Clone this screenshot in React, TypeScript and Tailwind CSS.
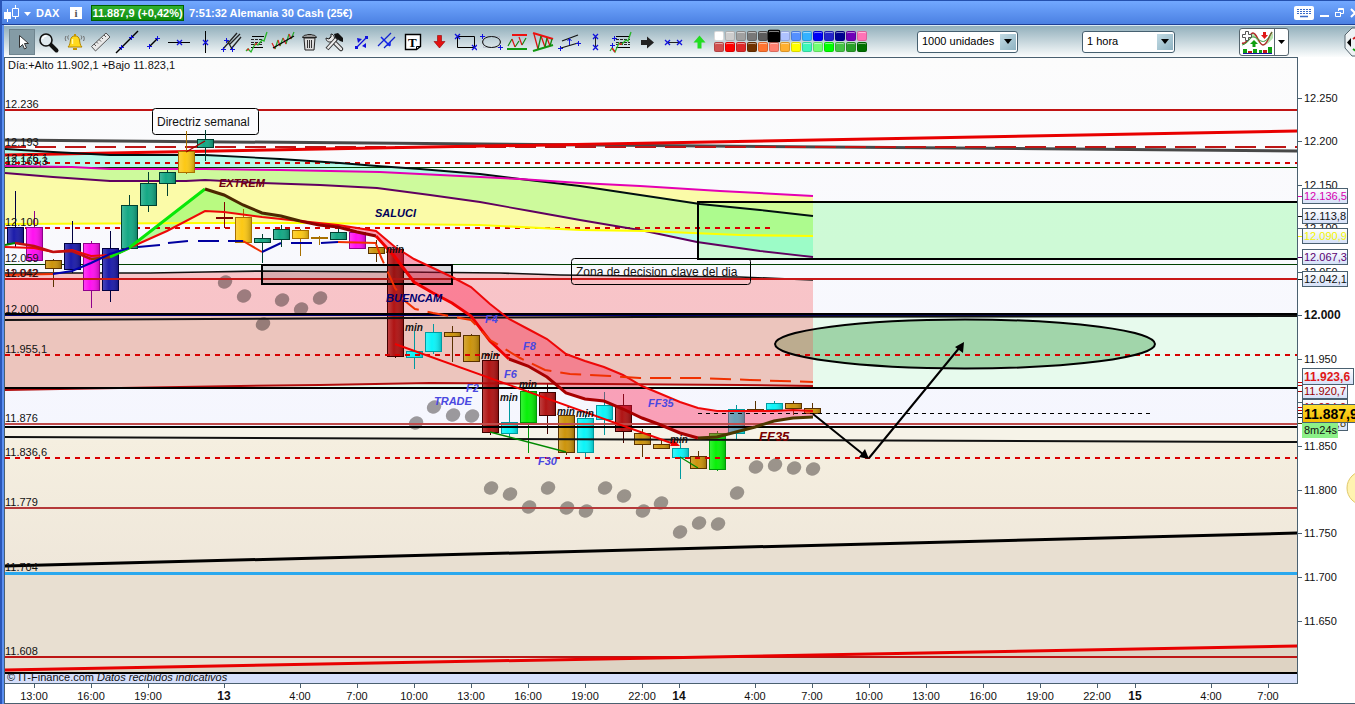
import { ReactNode } from "react";

type Point = [number, number];

const pts = (list: Point[]) => list.map((p) => p.join(",")).join(" ");

/* ---------- toolbar icons ---------- */

const Plus = ({ x, y }: { x: number; y: number }) => (
  <path
    d={`M${x - 2} ${y + 0.5}h5M${x + 0.5} ${y - 2}v5`}
    stroke="#1111dd"
    strokeWidth="1"
  />
);

const Cross = ({ x, y }: { x: number; y: number }) => (
  <path
    d={`M${x - 2} ${y - 2}l5 5M${x + 3} ${y - 2}l-5 5`}
    stroke="#1111dd"
    strokeWidth="1.3"
  />
);

const tools: { name: string; icon: ReactNode }[] = [
  {
    name: "Cursor",
    icon: (
      <path
        d="M10.500 6.500v12l3-3 2 4.500 2-1-2-4.500h4z"
        fill="#fff"
        stroke="#333"
      />
    ),
  },
  {
    name: "Zoom",
    icon: (
      <>
        <path d="M15 15l6.500 6.500" stroke="#111" strokeWidth="4" strokeLinecap="round" />
        <circle cx="11" cy="11" r="6" fill="#dfe9ee" stroke="#111" strokeWidth="1.6" />
        <path d="M7.500 10a4 4 0 0 1 4-3" stroke="#fff" strokeWidth="1.5" />
      </>
    ),
  },
  {
    name: "Alert",
    icon: (
      <>
        <path
          d="M7 18c2-2 2-4 2.500-7 .5-3 2-4 4.500-4s4 1 4.500 4c.5 3 .5 5 2.500 7z"
          fill="#ffd91e"
          stroke="#b38600"
        />
        <path d="M12 19h4v2h-4zM13 5h2v2h-2z" fill="#c79500" />
        <path d="M11.500 10v5" stroke="#fff8b0" strokeWidth="1.5" />
        <path d="M5 7c-1 2-1 3 0 5M7.500 6.500c-1 1.500-1 2 0 4M22.500 7c1 2 1 3 0 5M20 6.500c1 1.500 1 2 0 4" stroke="#666" />
      </>
    ),
  },
  {
    name: "Ruler",
    icon: (
      <>
        <path d="M4.500 17.500L19 4l4 4L8.500 22z" fill="#e9e9e9" stroke="#555" />
        <path d="M7 15l2 2M9.500 13l1.500 1.500M12 10.500l2 2M14.500 8.500L16 10M17 6l2 2" stroke="#555" />
      </>
    ),
  },
  {
    name: "Line",
    icon: (
      <>
        <path d="M3 24L25 2" stroke="#000" strokeWidth="1.4" />
        <Plus x={8} y={18} />
        <Plus x={18} y={8} />
      </>
    ),
  },
  {
    name: "Segment",
    icon: (
      <>
        <path d="M10 18L19 9" stroke="#000" strokeWidth="1.4" />
        <Plus x={10} y={17} />
        <Plus x={18} y={9} />
      </>
    ),
  },
  {
    name: "Horizontal line",
    icon: (
      <>
        <path d="M3 13.500h22" stroke="#000" />
        <Cross x={14} y={13} />
      </>
    ),
  },
  {
    name: "Vertical line",
    icon: (
      <>
        <path d="M14.500 2v22" stroke="#000" />
        <Cross x={14} y={13} />
      </>
    ),
  },
  {
    name: "Pitchfork",
    icon: (
      <>
        <path d="M6 20L20 4M10 11l5 9M12 16L23 5M14 20l10-12" stroke="#222" strokeWidth="1.3" />
        <Plus x={6} y={20} />
        <Plus x={15} y={20} />
        <Plus x={9} y={11} />
      </>
    ),
  },
  {
    name: "Fibonacci",
    icon: (
      <>
        <path d="M9 7.500h12M8 18.500h12" stroke="#000" />
        <path d="M8 10.500h12M8 13.500h12M8 15.500h12" stroke="#222" strokeDasharray="3 1" />
        <path d="M3 22l2-2 3 3 4-8 3 1 4-5 2 1 3-9" stroke="#27b527" strokeWidth="1.3" />
        <path d="M4 21l2-1M12 16l2-2" stroke="#d22" strokeWidth="1.5" />
      </>
    ),
  },
  {
    name: "Regression",
    icon: (
      <>
        <path d="M6 20l3-9M11 17l3-8M17 15l3-10M22 10l3-7" stroke="#27a527" strokeWidth="1.2" />
        <path d="M3 14l3 6M9 11l2 6M14 9l3 6M20 5l2 5" stroke="#d22" strokeWidth="1.2" />
        <path d="M4 19L25 7" stroke="#000" strokeWidth="1.3" />
      </>
    ),
  },
  {
    name: "Delete",
    icon: (
      <>
        <path d="M9 9h11l-1 12h-9z" fill="#ddd" stroke="#222" />
        <path d="M12.500 11v8M14.500 11v8M16.500 11v8" stroke="#333" />
        <path d="M7.500 8.500c1-3 4-2 5-3h4c1 1 4 0 5 3z" fill="#999" stroke="#222" />
      </>
    ),
  },
  {
    name: "Settings",
    icon: (
      <>
        <path d="M10 10l10 10" stroke="#222" strokeWidth="4.500" strokeLinecap="round" />
        <path d="M5 9c0 4 4 5 7 3s1-7-2-7v3L8 10z" fill="#e4e4e4" stroke="#222" />
        <path d="M11 11l9 9" stroke="#e4e4e4" strokeWidth="2.500" strokeLinecap="round" />
        <path d="M6 20L16 9" stroke="#333" strokeWidth="4" />
        <path d="M6.500 19.500L15 10" stroke="#eee" strokeWidth="2" />
        <path d="M13 5l4-1 5 5v4l-3-1-5-4z" fill="#111" />
      </>
    ),
  },
  {
    name: "Arrow line",
    icon: (
      <>
        <path d="M10 18L20 8" stroke="#1111dd" strokeWidth="1.3" />
        <path d="M8 17h3v3H8zM18 7h3v3h-3z" fill="#1111dd" />
        <path d="M10 9l5 1-4 4zM15 17l4-3v5z" fill="#1111dd" />
      </>
    ),
  },
  {
    name: "Channel",
    icon: (
      <>
        <path d="M5 17L18 4M11 19L22 8" stroke="#1122cc" strokeWidth="1.3" />
        <path d="M8 8l9 9M14 16h3v-3" stroke="#1122ee" strokeWidth="1.5" />
      </>
    ),
  },
  {
    name: "Text",
    icon: (
      <>
        <path d="M6.500 5.500h15v12l-4 3h-11z" fill="#fff" stroke="#000" strokeWidth="1.4" />
        <path d="M17.500 20.500v-3h4" stroke="#000" />
        <text x="9" y="18" fontSize="13" fontWeight="bold" fill="#000" className="font-['Liberation_Serif',serif]">
          T
        </text>
      </>
    ),
  },
  {
    name: "Sell",
    icon: <path d="M12.500 6.500h4v6h3.500l-5.500 6.500-5.500-6.500h3.500z" fill="#e31212" stroke="#990000" strokeWidth=".6" />,
  },
  {
    name: "Rectangle",
    icon: (
      <>
        <path d="M6.500 7.500h17v11h-17z" stroke="#000" />
        <Cross x={6} y={7} />
        <Cross x={23} y={18} />
      </>
    ),
  },
  {
    name: "Ellipse",
    icon: (
      <>
        <path d="M6.500 7.500h16v11h-16z" stroke="#aab" strokeWidth=".6" />
        <ellipse cx="14.500" cy="13" rx="9" ry="5.500" stroke="#111" />
        <Plus x={5} y={7} />
        <Plus x={23} y={18} />
      </>
    ),
  },
  {
    name: "Support and resistance",
    icon: (
      <>
        <path d="M9 6h15" stroke="#ee1111" strokeWidth="2" />
        <path d="M4 20h20" stroke="#119911" strokeWidth="2" />
        <path d="M5 17l4-7M12 18l4-6M19 16l4-7" stroke="#118811" strokeWidth="1.2" />
        <path d="M9 10l3 8M16 8l3 8" stroke="#dd1111" strokeWidth="1.2" />
      </>
    ),
  },
  {
    name: "Triangle",
    icon: (
      <>
        <path d="M4 4l20 6" stroke="#ee1111" strokeWidth="2" />
        <path d="M4 22l20-6" stroke="#119911" strokeWidth="2" />
        <path d="M5 5l4 15M12 7l4 11M18 9l3 8" stroke="#dd1111" strokeWidth="1.3" />
        <path d="M9 20l3-13M16 18l2-9M21 17l2-7" stroke="#118811" strokeWidth="1.3" />
      </>
    ),
  },
  {
    name: "Parallel lines",
    icon: (
      <>
        <path d="M7 12L23 6M6 19l17-5" stroke="#111" strokeWidth="1.3" />
        <path d="M14.500 16v-6M12.500 12l2-2.500 2 2.500" stroke="#1111dd" />
        <Plus x={5} y={19} />
        <Plus x={23} y={14} />
      </>
    ),
  },
  {
    name: "Vertical measure",
    icon: (
      <>
        <path d="M14.500 7v12" stroke="#222" />
        <Cross x={14} y={7} />
        <Cross x={14} y={18} />
      </>
    ),
  },
  {
    name: "Fibonacci projection",
    icon: (
      <>
        <path d="M9 7.500h14M9 18.500h14" stroke="#000" />
        <path d="M9 10.500h14M9 13.500h14M9 15.500h14" stroke="#222" strokeDasharray="3 1" />
        <path d="M3 22l2-3 3 4 4-9 3 1 4-4 2 1 3-9" stroke="#27b527" strokeWidth="1.3" />
        <path d="M5 19l3 4M12 15l3 0" stroke="#d22" strokeWidth="1.5" />
        <Plus x={7} y={9} />
        <Plus x={5} y={16} />
      </>
    ),
  },
  {
    name: "Next",
    icon: <path d="M8 11h6V7.500l7 6-7 6V16H8z" fill="#222" />,
  },
  {
    name: "Horizontal measure",
    icon: (
      <>
        <path d="M8 13.500h13" stroke="#222" />
        <Cross x={8} y={13} />
        <Cross x={20} y={13} />
      </>
    ),
  },
  {
    name: "Buy",
    icon: <path d="M12.500 19.500h4v-6h4l-6-7-6 7h4z" fill="#22dd22" />,
  },
];

const palette = [
  "bg-white", "bg-[#cdcdcd]", "bg-[#a0a0a0]", "bg-[#787878]", "bg-[#5c5c5c]", "bg-black", "bg-[#aec2ff]",
  "bg-[#5590ff]", "bg-[#33b2ff]", "bg-[#0000f5]", "bg-[#2424cc]", "bg-[#000090]", "bg-[#7000b8]", "bg-[#ff72b6]",
  "bg-[#d05050]", "bg-[#ff0000]", "bg-[#de2828]", "bg-[#703200]", "bg-[#ff7430]", "bg-[#ff8070]", "bg-[#ffb030]",
  "bg-[#ffff00]", "bg-[#3cf8b8]", "bg-[#72ff72]", "bg-[#00ff00]", "bg-[#44c444]", "bg-[#28a028]", "bg-[#007000]",
];

/* ---------- chart data ---------- */

const candleColors = {
  navy: { fill: "#1c1caa", edge: "#000040" },
  magenta: { fill: "#ff10f0", edge: "#90008c" },
  gold: { fill: "#cc940c", edge: "#5a3200" },
  yellow: { fill: "#fcc814", edge: "#a87000" },
  teal: { fill: "#14a884", edge: "#004030" },
  red: { fill: "#b01414", edge: "#400000" },
  maroon: { fill: "#800000", edge: "#800000" },
  cyan: { fill: "#0cf4f8", edge: "#009aa0" },
  green: { fill: "#08f008", edge: "#00980a" },
};

type Candle = [number, keyof typeof candleColors, number, number, number, number];

// x, colour, body top, body bottom, wick top, wick bottom
const candles: Candle[] = [
  [15, "navy", 227, 243, 191, 248],
  [34, "magenta", 227, 260, 211, 262],
  [53, "gold", 260, 268, 259, 287],
  [72, "navy", 243, 269, 221, 273],
  [91, "magenta", 243, 290, 241, 308],
  [110, "navy", 248, 290, 231, 302],
  [129, "teal", 205, 248, 195, 249],
  [148, "teal", 183, 205, 172, 212],
  [167, "teal", 172, 183, 170, 196],
  [186, "yellow", 151, 172, 132, 174],
  [205, "teal", 139, 147, 130, 161],
  [224, "maroon", 217, 218, 202, 228],
  [243, "yellow", 217, 242, 209, 243],
  [262, "teal", 238, 242, 234, 263],
  [281, "teal", 229, 239, 225, 247],
  [300, "yellow", 230, 238, 229, 256],
  [319, "yellow", 237, 238, 236, 245],
  [338, "teal", 232, 239, 228, 240],
  [357, "magenta", 232, 248, 231, 249],
  [376, "gold", 247, 253, 240, 262],
  [395, "red", 249, 356, 248, 358],
  [414, "cyan", 351, 357, 331, 369],
  [433, "cyan", 332, 351, 324, 354],
  [452, "gold", 332, 336, 326, 362],
  [471, "gold", 335, 361, 334, 362],
  [490, "red", 360, 432, 359, 435],
  [509, "cyan", 422, 433, 400, 437],
  [528, "green", 391, 422, 390, 453],
  [547, "red", 392, 415, 383, 434],
  [566, "gold", 415, 452, 414, 455],
  [585, "cyan", 418, 452, 415, 457],
  [604, "cyan", 405, 419, 392, 435],
  [623, "red", 405, 431, 394, 443],
  [642, "gold", 433, 444, 429, 457],
  [661, "gold", 444, 448, 440, 449],
  [680, "cyan", 448, 457, 442, 479],
  [698, "gold", 456, 468, 451, 469],
  [717, "green", 433, 469, 431, 471],
  [736, "cyan", 409, 433, 405, 440],
  [755, "gold", 409, 411, 401, 411],
  [774, "cyan", 403, 409, 401, 410],
  [793, "gold", 403, 408, 401, 415],
  [812, "gold", 408, 413, 403, 414],
];

const dots: Point[] = [
  [225, 282], [244, 296], [263, 324], [282, 300], [301, 309], [320, 298],
  [416, 423], [434, 407], [453, 415], [472, 416],
  [491, 488], [510, 494], [529, 507], [548, 488], [567, 508], [586, 511], [605, 488],
  [624, 496], [643, 511], [661, 503], [680, 532], [699, 523], [718, 524], [737, 493],
  [756, 467], [775, 465], [794, 468], [813, 469],
];

const black: Point[] = [
  [5, 149], [53, 152], [110, 155], [205, 155], [280, 159], [340, 163], [377, 166], [420, 169], [480, 174],
  [520, 179], [580, 186], [640, 195], [700, 204], [760, 210], [813, 216],
];
const magenta: Point[] = [
  [5, 166], [72, 167], [110, 169], [205, 169], [280, 170], [380, 172], [480, 177], [520, 179], [580, 183],
  [640, 186], [720, 191], [813, 196],
];
const purple: Point[] = [
  [5, 173], [53, 177], [110, 181], [186, 181], [205, 180], [262, 183], [320, 185], [377, 188], [430, 195],
  [480, 202], [530, 211], [580, 220], [645, 231], [697, 242], [760, 251], [813, 257],
];
const yellow: Point[] = [
  [5, 224], [205, 223], [300, 223], [480, 225], [580, 230], [645, 231], [740, 235], [813, 236],
];

const before = (list: Point[], x: number) => list.filter((p) => p[0] <= x);
const after = (list: Point[], x: number) => list.filter((p) => p[0] >= x);
const band = (a: Point[], b: Point[]) => pts([...a, ...[...b].reverse()]);

const slow: Point[] = [
  [5, 247], [34, 248], [53, 252], [72, 250], [91, 256], [110, 255], [129, 248], [167, 231], [205, 211],
  [224, 212], [262, 217], [300, 221], [338, 225], [376, 231], [395, 247], [414, 259], [433, 268],
  [452, 277], [471, 287], [490, 304], [509, 319], [528, 329], [547, 339], [566, 354], [585, 361],
  [604, 367], [623, 375], [642, 386], [661, 394], [680, 402], [698, 408], [717, 411], [736, 411],
  [774, 411], [793, 410], [813, 411],
];
const fast: Point[] = [
  [5, 245], [15, 243], [34, 246], [53, 252], [72, 251], [91, 259], [110, 257], [129, 248], [205, 189],
  [224, 195], [243, 205], [262, 213], [281, 216], [300, 221], [319, 225], [338, 227], [357, 232],
  [376, 236], [395, 257], [414, 282], [433, 293], [452, 303], [471, 316], [490, 341], [509, 359],
  [528, 366], [547, 377], [566, 393], [585, 399], [604, 401], [623, 409], [642, 418], [661, 425],
  [680, 433], [698, 438], [717, 437], [736, 432], [755, 427], [774, 421], [793, 418], [813, 417],
];
const between = (list: Point[], a: number, b: number) => after(before(list, b), a);

const zoneTop: Point[] = [
  [5, 273], [150, 273], [205, 272], [262, 271], [400, 272], [500, 273], [560, 275], [640, 276], [740, 277], [813, 280],
];
const zoneBottom: Point[] = [
  [5, 390], [60, 389], [120, 388], [240, 386], [320, 385], [430, 383], [600, 384], [740, 385], [813, 386],
];

const levels: [string, number][] = [
  ["12.236", 108], ["12.193", 146], ["12.176,1", 162], ["12.169,3", 165], ["12.100", 226],
  ["12.059", 262], ["12.042", 277], ["12.000", 313], ["11.955,1", 353], ["11.876", 422],
  ["11.836,6", 456], ["11.779", 506], ["11.704", 571], ["11.608", 655],
];

const notes: [string, number, number, string][] = [
  ["EXTREM", 219, 187, "#6e0010"],
  ["SALUCI", 375, 217, "#000058"],
  ["BUENCAM", 386, 302, "#000070"],
  ["F4", 485, 323, "#4a48e0"],
  ["F8", 523, 350, "#4a48e0"],
  ["F6", 504, 378, "#4a48e0"],
  ["F2", 466, 392, "#4a48e0"],
  ["TRADE", 434, 405, "#4a48e0"],
  ["F30", 538, 465, "#4a48e0"],
  ["FF35", 648, 407, "#4a48e0"],
];

const mins: Point[] = [
  [386, 253], [405, 331], [481, 359], [500, 401], [519, 388], [557, 415], [576, 417], [670, 443],
];

const prices: [string, number][] = [
  ["12.250", 98], ["12.200", 141], ["12.150", 185], ["12.100", 228], ["12.050", 272],
  ["11.950", 359], ["11.850", 446], ["11.800", 490], ["11.750", 533],
  ["11.700", 577], ["11.650", 621],
];

const priceTags: [string, number, string][] = [
  ["12.136,5", 196, "#d800b0"],
  ["12.113,8", 216, "#111"],
  ["12.090,9", 236, "#f4f400"],
  ["12.067,3", 257, "#5c0070"],
  ["12.042,1", 279, "#111"],
  ["11.904,0", 407, "#c00000"],
  ["11.883,8", 423, "#4a3a00"],
  ["11.920,7", 391, "#990000"],
];

const times: [string, number][] = [
  ["13:00", 34], ["16:00", 91], ["19:00", 148], ["13", 224], ["4:00", 300], ["7:00", 357],
  ["10:00", 414], ["13:00", 471], ["16:00", 528], ["19:00", 585], ["22:00", 642], ["14", 679],
  ["4:00", 755], ["7:00", 812], ["10:00", 869], ["13:00", 926], ["16:00", 983], ["19:00", 1040],
  ["22:00", 1097], ["15", 1135], ["4:00", 1211], ["7:00", 1268],
];

/* ---------- chart ---------- */

const HLine = ({ y, color, w = 2, dash, x1 = 5, x2 = 1297 }: {
  y: number;
  color: string;
  w?: number;
  dash?: string;
  x1?: number;
  x2?: number;
}) => (
  <line x1={x1} x2={x2} y1={y} y2={y} stroke={color} strokeWidth={w} strokeDasharray={dash} />
);

const Plot = () => (
  <svg
    viewBox="5 58 1292 625"
    preserveAspectRatio="none"
    className="block w-full h-[625px]"
    fill="none"
    fontSize="11"
  >
    <defs>
      <linearGradient id="sky" x1="0" y1="0" x2="0" y2="1">
        <stop offset="0" stopColor="#fcfcfc" />
        <stop offset="1" stopColor="#f5f6fe" />
      </linearGradient>
      <linearGradient id="sand" x1="0" y1="0" x2="0" y2="1">
        <stop offset="0" stopColor="#f5efe0" />
        <stop offset="1" stopColor="#efe7da" />
      </linearGradient>
      <linearGradient id="shine" x1="0" y1="0" x2="1" y2="0">
        <stop offset="0" stopColor="#fff" stopOpacity=".18" />
        <stop offset=".4" stopColor="#fff" stopOpacity="0" />
        <stop offset="1" stopColor="#000" stopOpacity=".22" />
      </linearGradient>
    </defs>

    {/* background zones */}
    <rect x="5" y="58" width="1292" height="370" fill="url(#sky)" />
    <rect x="5" y="316" width="1292" height="72" fill="#e7faed" />
    <rect x="5" y="428" width="1292" height="12" fill="#f6f3e8" />
    <rect x="5" y="440" width="1292" height="128" fill="url(#sand)" />
    <polygon points="5,566 1297,533 1297,673 5,673" fill="#e8dfd1" />
    <polygon points="5,670 1297,646 1297,673 5,673" fill="#ded3c3" />
    <rect x="5" y="674" width="1292" height="10" fill="#d6dffb" />
    <ellipse cx="965" cy="344" rx="190" ry="24.500" fill="#008010" fillOpacity=".3" />
    <polygon points={band(zoneTop, zoneBottom)} fill="#fa5255" fillOpacity=".31" />

    {/* moving average bands */}
    <polygon points={band(before(black, 520), before(magenta, 520))} fill="#b6fbe9" />
    <polygon points={band(before(magenta, 520), [...before(purple, 480), [520, 209]])} fill="#cdfa9c" />
    <polygon points={band(before(purple, 645), before(yellow, 645))} fill="#fbfba8" />
    <polygon points={band(after(magenta, 520), after(black, 520))} fill="#fbfba8" />
    <polygon
      points={band([...after(black, 520)], [[520, 209], [580, 220], ...after(yellow, 645)])}
      fill="#cdfa9c"
    />
    <polygon points={band(after(yellow, 645), after(purple, 645))} fill="#b6fbe9" />
    <rect x="699" y="203" width="620" height="56" fill="#50ff64" fillOpacity=".25" />

    <polygon points={band(between(fast, 129, 300), between(slow, 129, 300))} fill="#9cfa70" fillOpacity=".7" />

    {/* levels */}
    <HLine y={110} color="#c01414" />
    <path d="M5 140L1297 151" stroke="#484848" strokeWidth="3" />
    <HLine y={147} color="#bd1515" dash="21 9" />
    <path d="M5 155L1297 131" stroke="#e80000" strokeWidth="3" />
    <HLine y={163} color="#d80000" dash="5 5" />
    <HLine y={167.5} color="#004000" w={1} />
    <HLine y={228} color="#d80000" dash="5 5" x2={770} />
    <HLine y={264.5} color="#004000" w={1} />
    <polyline points={pts(zoneTop)} stroke="#101010" strokeWidth="1.6" />

    <polyline points={pts(black)} stroke="#001010" strokeWidth="1.8" />
    <polyline points={pts(magenta)} stroke="#e400b4" strokeWidth="2" />
    <polyline points={pts(purple)} stroke="#600060" strokeWidth="1.8" />
    <polyline points={pts(yellow)} stroke="#ffff00" strokeWidth="2.200" />

    {dots.map(([x, y]) => (
      <ellipse
        key={x}
        cx={x}
        cy={y}
        rx="7.500"
        ry="6.300"
        transform={`rotate(-30 ${x} ${y})`}
        fill="#201818"
        fillOpacity=".42"
      />
    ))}

    {/* candles */}
    {candles.map(([x, name, top, bottom, high, low]) => {
      const { fill, edge } = candleColors[name];
      return (
        <g key={x}>
          <path d={`M${x + 0.5} ${high}V${low}`} stroke={edge} />
          <rect x={x - 7.5} y={top + 0.5} width="16" height={bottom - top} fill={fill} stroke={edge} />
          <rect x={x - 7} y={top + 1} width="15" height={bottom - top - 1} fill="url(#shine)" />
        </g>
      );
    })}

    <polygon points={band(after(slow, 300), after(fast, 300))} fill="#ff1446" fillOpacity=".38" />
    <HLine y={279} color="#c81818" />
    <rect x="262" y="265" width="190" height="19" fill="#000" fillOpacity=".12" stroke="#000" strokeWidth="2" />
    <path d="M1297 202H698V259H1297" stroke="#000" strokeWidth="2" />

    <polyline points={pts(zoneBottom)} stroke="#b00c0c" strokeWidth="2" />
    <rect x="5" y="313" width="1292" height="2" fill="#000" />
    <HLine y={315.5} color="#000070" w={1} />
    <path d="M5 320L640 317L1297 316" stroke="#111" strokeWidth="2" />
    <HLine y={355} color="#d80000" dash="5 5" />
    <HLine y={388} color="#000" />
    <HLine y={424} color="#bf4a4a" />
    <HLine y={427} color="#000" />
    <path d="M5 437L1297 442" stroke="#111" strokeWidth="2" />
    <HLine y={458} color="#d80000" dash="5 5" />
    <HLine y={508} color="#b53a3a" />
    <path d="M5 566L1297 533" stroke="#000" strokeWidth="3" />
    <HLine y={573.5} color="#2aa8ee" w={3} />
    <HLine y={657} color="#bd1515" />
    <path d="M5 670L1297 646" stroke="#e80000" strokeWidth="3" />
    <HLine y={673} color="#000" />
    <HLine y={413.5} color="#000" w={1} dash="4 4" x1={698} x2={1150} />

    {/* averages */}
    <polyline points={pts(slow)} stroke="#ee0808" strokeWidth="2" />
    <polyline points={pts(before(fast, 15))} stroke="#008800" strokeWidth="2" />
    <polyline points={pts(between(fast, 15, 91))} stroke="#c01010" strokeWidth="2.500" />
    <polyline points={pts(between(fast, 91, 129))} stroke="#9a3000" strokeWidth="2.500" />
    <polyline points={pts(between(fast, 110, 205))} stroke="#08e808" strokeWidth="3" />
    <polyline points={pts(between(fast, 205, 300))} stroke="#4c2800" strokeWidth="3" />
    <polyline points={pts(between(fast, 300, 376))} stroke="#900000" strokeWidth="3" />
    <polyline points={pts(between(fast, 376, 509))} stroke="#f00000" strokeWidth="3" />
    <polyline points={pts(between(fast, 509, 698))} stroke="#a80000" strokeWidth="3" />
    <polyline points={pts(after(fast, 698))} stroke="#4c3800" strokeWidth="3" />

    <path d="M5 275L53 274M243 241L262 252M338 242L376 243" stroke="#f03000" strokeWidth="2" />
    <path d="M53 274L72 271L91 263L110 254L129 248" stroke="#0000b0" strokeWidth="2" />
    <path d="M138 247L160 245M168 243L188 241M198 241H219M228 241H243M262 252L281 243M291 243H312M321 243L338 242" stroke="#0000a0" strokeWidth="2" />
    <path
      d="M376 244L381 257L395 288L405 301L415 309L433 313L471 320L490 340L520 358L545 370L570 374L610 376L640 378L700 378L750 380L813 382"
      stroke="#f03000"
      strokeWidth="2"
      strokeDasharray="21 9"
    />

    {/* drawings */}
    <path d="M395 344L674 444" stroke="#f00000" strokeWidth="2" />
    <path d="M680 446L670 446L673 439z" fill="#f00000" />
    <path d="M490 432L566 452M680 457L698 468" stroke="#008800" strokeWidth="1.300" />
    <path d="M186 152L205 141" stroke="#a00000" strokeWidth="1.300" />
    <ellipse cx="965" cy="344" rx="190" ry="24.500" stroke="#000" strokeWidth="2" />
    <path d="M813 414L864 455M869 458L960 347" stroke="#000" strokeWidth="2" />
    <path d="M869 459L859 457L865 449zM964 342L955 347L963 353z" fill="#000" />

    {/* labels */}
    <g fill="#111">
      <text x="8" y="69">Día:+Alto 11.902,1 +Bajo 11.823,1</text>
      <text x="5" y="277" fill="#990000">11.042</text>
      {levels.map(([label, y]) => (
        <text key={label} x="5" y={y}>
          {label}
        </text>
      ))}
      <rect x="152.500" y="108.500" width="106" height="26" rx="3" fill="#fcfcfe" stroke="#000" />
      <path d="M186.500 131v4" stroke="#a87000" />
      <path d="M205.500 130v5" stroke="#004030" />
      <text x="157" y="126" fontSize="12">Directriz semanal</text>
      <rect x="571.500" y="258.500" width="179" height="26" rx="3" fill="none" stroke="#000" />
      <text x="576" y="276" fontSize="12">Zona de decision clave del dia</text>
      <text x="7" y="681">© IT-Finance.com</text>
      <text x="97" y="681" fontStyle="italic">Datos recibidos indicativos</text>
    </g>
    <g fontWeight="bold" fontStyle="italic">
      {notes.map(([label, x, y, color]) => (
        <text key={label} x={x} y={y} fill={color}>
          {label}
        </text>
      ))}
      <text x="759" y="441" fontSize="13" fill="#7a0000">FF35</text>
      <g fontSize="10" fill="#111">
        {mins.map(([x, y]) => (
          <text key={x} x={x} y={y}>
            min
          </text>
        ))}
      </g>
    </g>
  </svg>
);

const PriceAxis = () => (
  <svg viewBox="1297 57 58 647" className="block shrink-0 w-[58px] h-[647px]" fontSize="11" fill="#111">
    <defs>
      <linearGradient id="tag" x1="0" y1="0" x2="0" y2="1">
        <stop offset="0" stopColor="#fff" />
        <stop offset="1" stopColor="#d4e0f8" />
      </linearGradient>
      <linearGradient id="gold" x1="0" y1="0" x2="0" y2="1">
        <stop offset="0" stopColor="#ffe030" />
        <stop offset="1" stopColor="#f4b800" />
      </linearGradient>
    </defs>
    <path d="M1297.500 57V684" stroke="#4a6070" />
    <path d="M1297 703.500H1355" stroke="#4a6070" />
    {prices.map(([label, y]) => (
      <g key={label}>
        <path d={`M1298 ${y + 0.5}h4`} stroke="#4a6070" />
        <text x="1304" y={y + 4}>
          {label}
        </text>
      </g>
    ))}
    <path d="M1298 315.500h4M1298 402.500h4" stroke="#4a6070" />
    <text x="1304" y="319" fontSize="12" fontWeight="bold">12.000</text>
    {priceTags.map(([label, y, color]) => (
      <g key={label}>
        <path d={`M1298 ${y + 0.5}h4`} stroke={color} />
        <rect x="1302.500" y={y - 7.5} width="45" height="15" fill="url(#tag)" stroke="#4a6070" />
        <text x="1304" y={y + 4} fill={color}>
          {label}
        </text>
      </g>
    ))}
    <path d="M1298 382.500h4M1298 385.500h4M1298 410.500h4" stroke="#c00000" />
    <path d="M1298 413.500h4M1298 417.500h4" stroke="#111" />
    <rect x="1302.500" y="368.500" width="51" height="16" fill="url(#tag)" stroke="#4a6070" />
    <text x="1304" y="381" fontSize="12" fontWeight="bold" fill="#e01818">11.923,6</text>
    <rect x="1302.500" y="404.500" width="56" height="18" fill="url(#gold)" stroke="#4a6070" />
    <text x="1304" y="419" fontSize="14" fontWeight="bold" fill="#000">11.887,9</text>
    <rect x="1302" y="423" width="36" height="15" fill="#8cf088" />
    <text x="1304" y="434">8m24s</text>
    <circle cx="1364" cy="488" r="17" fill="#fff3b0" stroke="#e0c868" />
  </svg>
);

const TimeAxis = () => (
  <svg viewBox="5 683 1292 20" preserveAspectRatio="none" className="block w-full h-5" fontSize="11" fill="#111">
    <path d="M5 683.500H1297" stroke="#4a6070" />
    {times.map(([label, x]) => (
      <g key={x}>
        <path d={`M${x + 0.5} 684v4`} stroke="#4a6070" />
        {label.includes(":") ? (
          <text x={x} y="700" textAnchor="middle">
            {label}
          </text>
        ) : (
          <text x={x} y="700" textAnchor="middle" fontSize="12" fontWeight="bold">
            {label}
          </text>
        )}
      </g>
    ))}
  </svg>
);

/* ---------- bars ---------- */

const TitleBar = () => (
  <header className="flex items-center h-[25px] pt-px overflow-hidden border-t border-b border-t-[#2450ae] border-b-[#1d3f96] bg-linear-to-b from-[#72a8ff] to-[#4b80e2] text-[11px] font-bold text-white">
    <button aria-label="Menu" className="flex items-center">
      <svg width="34" height="22" viewBox="0 0 34 22" fill="none">
        <path d="M5.500 7v13M13.500 3v14" stroke="#fff" />
        <path d="M2 10h7v7H2z" fill="#fff" />
        <path d="M10.500 6.500h6v8h-6z" fill="#5b92f2" stroke="#fff" />
        <path d="M22 10h7l-3.500 4z" fill="#fff" />
      </svg>
    </button>
    <span className="w-[34px]">DAX</span>
    <button aria-label="Info" className="grid place-items-center w-3 h-3 bg-white text-[11px] leading-none text-[#555] font-['Liberation_Serif',serif]">
      i
    </button>
    <span className="ml-[9px] w-[93px] h-4 shrink-0 flex items-center justify-center border border-[#006000] bg-linear-to-b from-[#30b030] to-[#0a8c0a]">
      11.887,9 (+0,42%)
    </span>
    <span className="ml-[5px]">7:51:32 Alemania 30 Cash (25€)</span>
    <div className="flex items-center ml-auto">
      <button aria-label="Keyboard">
        <svg width="20" height="14" viewBox="0 0 20 14" className="block">
          <rect width="20" height="14" rx="2" fill="#fff" />
          <path d="M3 3.500h14M3 5.500h14M3 7.500h14" stroke="#3a6bc8" strokeDasharray="2 1" />
          <path d="M6 10.500h8" stroke="#3a6bc8" strokeWidth="1.500" />
        </svg>
      </button>
      <button aria-label="Minimize" className="ml-[6px]">
        <svg width="9" height="12" viewBox="0 0 9 12" className="block">
          <path d="M0 9h9" stroke="#fff" strokeWidth="2" />
        </svg>
      </button>
      <button aria-label="Restore" className="ml-[6px]">
        <svg width="9" height="10" viewBox="0 0 9 10" className="block" fill="none" stroke="#fff">
          <path d="M3.500 3V.500h5v5H6M3 1.500h6M.500 4.500h5v4h-5zM0 4.500h6" />
        </svg>
      </button>
      <button aria-label="Close" className="ml-[6px] w-[5px] overflow-hidden">
        <svg width="10" height="10" viewBox="0 0 10 10" className="block">
          <path d="M1 1l8 8M9 1L1 9" stroke="#fff" strokeWidth="2" />
        </svg>
      </button>
    </div>
  </header>
);

const Dropdown = ({ label, value, className }: { label: string; value: string; className: string }) => (
  <div className={`relative h-[22px] shrink-0 ${className}`}>
    <select
      aria-label={label}
      className="block appearance-none w-full h-full pl-1 pb-px text-[11px] leading-none text-black bg-white border border-[#466070] rounded-[3px]"
    >
      <option>{value}</option>
    </select>
    <span className="absolute top-[3px] right-[2px] grid place-items-center w-4 h-4 bg-linear-to-br from-[#c2dbe4] to-[#8fb3c2] pointer-events-none">
      <svg width="8" height="5" viewBox="0 0 8 5">
        <path d="M0 0h8L4 5z" fill="#000" />
      </svg>
    </span>
  </div>
);

const Toolbar = () => (
  <div className="flex items-center h-8 pl-[5px] border-t border-[#dcebf2] bg-linear-to-b from-[#93b0bc] to-[#fbfdfd]">
    {tools.map((tool, i) => (
      <button
        key={tool.name}
        aria-label={tool.name}
        className={`w-[26px] h-[26px] shrink-0 ${i === 0 ? "bg-[#849ba5] border border-[#70858f]" : ""}`}
      >
        <svg viewBox={i === 0 ? "1 1 24 24" : "0 0 26 26"} className="block w-full h-full" fill="none">
          {tool.icon}
        </svg>
      </button>
    ))}
    <div className="grid grid-cols-14 w-[154px] ml-[3px] shrink-0">
      {palette.map((color) => (
        <button
          key={color}
          aria-label={color.slice(3)}
          className={`h-[10px] w-[10px] mb-px rounded-xs border border-black/15 inset-shadow-2xs inset-shadow-white/50 ${color} ${
            color === "bg-black" ? "scale-130" : ""
          }`}
        />
      ))}
    </div>
    <Dropdown label="Unidades" value="1000 unidades" className="w-[101px] ml-[49px]" />
    <Dropdown label="Intervalo" value="1 hora" className="w-[93px] ml-16" />
    <div className="flex shrink-0 w-[50px] h-7 ml-16 bg-white border border-[#55656e] rounded-[3px]">
      <button aria-label="Indicators" className="w-[35px] border-r border-[#55656e]">
        <svg viewBox="0 0 34 26" className="block w-[34px] h-[26px]" fill="none">
          <path d="M2 15c6 2 6-11 11-11s6 13 11 11 5-8 9-11v5c-3 4-5 6-9 7-6 1-8-9-11-8S8 17 2 15z" fill="#b4e4ac" />
          <path d="M2 14c6 2 7-10 11-10s6 12 10 12 5-7 9-13" stroke="#b02828" strokeWidth="1.400" />
          <path d="M2 16c6-1 8-9 12-8s7 6 11 4 4-5 7-9" stroke="#3a9a3a" />
          <path d="M5.500 2.500h3v3h3v3h-3v3h-3v-3h-3v-3h3z" fill="#fff" stroke="#555" />
          <path d="M23 3h3v3h2l-3.500 4L21 6h2z" fill="#e01818" />
          <path d="M14 11l4 4h-2.500v3h-3v-3H10z" fill="#10a010" />
          <path d="M3 20h4v4H3zM13 20h4v4h-4zM28 18h4v6h-4zM19 21h3v3h-3z" fill="#10a010" />
          <path d="M8 22h4v2H8zM23 21h4v3h-4z" fill="#c01818" />
          <path d="M3 24.500h29" stroke="#1818a0" />
        </svg>
      </button>
      <button aria-label="More indicators" className="grid place-items-center flex-1">
        <svg width="7" height="4" viewBox="0 0 7 4">
          <path d="M0 0h7L3.500 4z" fill="#000" />
        </svg>
      </button>
    </div>
    <button aria-label="Expand" className="w-[11px] h-[30px] ml-auto overflow-hidden">
      <svg width="11" height="30" viewBox="0 0 11 30" className="block" fill="none">
        <path d="M12 1H8L1 8v13l7 8h4" fill="#eef3f5" stroke="#55656e" />
        <path d="M7 11v9l-4-4.500z" fill="#000" />
        <path d="M9 12l3-2" stroke="#d01818" strokeWidth="2" />
        <path d="M9 22l3 2" stroke="#10a010" strokeWidth="2" />
      </svg>
    </button>
  </div>
);

const App = () => {
  return (
    <main className="bg-white border-l-2 border-[#2a56b8] overflow-hidden font-['Liberation_Sans',Arial,sans-serif]">
      <TitleBar />
      <div className="border-l-2 border-[#5a8ff0]">
        <Toolbar />
        <div className="flex">
          <div className="flex-1 min-w-0 border-t border-l border-[#4a6070]">
            <Plot />
            <TimeAxis />
            <div className="h-px bg-[#4a6070]" />
          </div>
          <PriceAxis />
        </div>
      </div>
    </main>
  );
};

export default App;
